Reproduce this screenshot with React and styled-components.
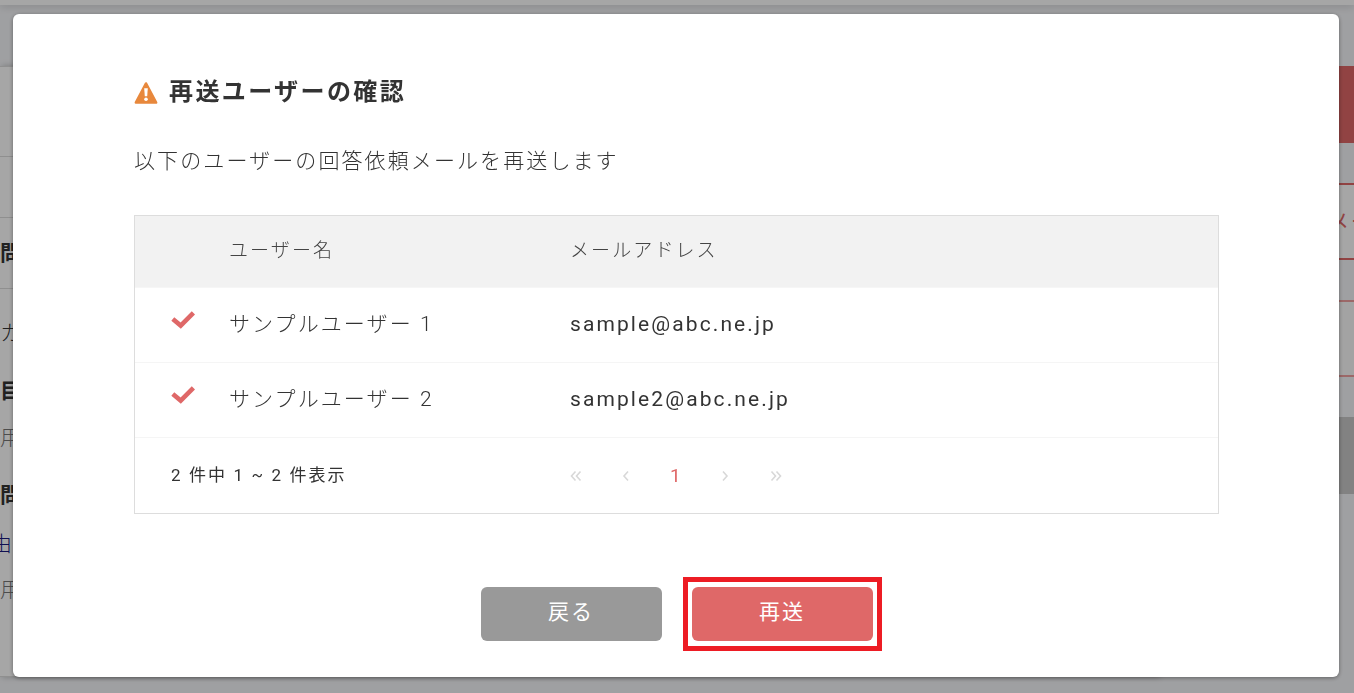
import React, { useState } from "react";
import styled, { createGlobalStyle } from "styled-components";

const GlobalStyle = createGlobalStyle`
  * {
    box-sizing: border-box;
  }
  body {
    margin: 0;
    color: #333;
    font-family: Roboto, "Noto Sans CJK JP", sans-serif;
    font-size: 21px;
    letter-spacing: 0.1em;
    overflow: hidden;
  }
`;

/* ---------- page behind the dialog ---------- */

const Page = styled.div`
  min-height: 100vh;
  overflow: hidden;
  background: #f5f6f9;
`;

const TopBar = styled.header`
  height: 5px;
  background: #fff;
  box-shadow: 0 1px 8px rgba(0, 0, 0, 0.2);
`;

const PageBody = styled.div`
  display: flex;
  padding-top: 61px;
`;

const Panel = styled.main`
  flex: 1;
  min-width: 0;
  background: #fff;
  border-top: 1px solid #dcdcdc;
  border-bottom: 1px solid #dcdcdc;
  box-shadow: 2px 0 6px rgba(0, 0, 0, 0.25);
`;

const Line = styled.div`
  display: flex;
  align-items: center;
  height: ${(props) => props.$height};
  padding-bottom: 4px;
  border-bottom: ${(props) => (props.$ruled ? "1px solid #dcdcdc" : "none")};
  color: ${(props) => (props.$muted ? "#777" : "#333")};
  font-weight: ${(props) => (props.$bold ? 700 : 300)};
`;

const ClippedLink = styled.a`
  display: flex;
  justify-content: flex-end;
  width: 12px;
  overflow: hidden;
  color: #1a1a80;
  letter-spacing: 0;
  text-decoration: none;
`;

const Aside = styled.aside`
  display: flex;
  flex-direction: column;
  gap: 40px;
  width: 196px;
  padding-left: 140px;
`;

const SideButton = styled.button`
  flex: none;
  height: 77px;
  padding: 0 0 4px 28px;
  overflow: hidden;
  border: 2px solid ${(props) => props.$line};
  border-right: none;
  background: ${(props) => props.$fill};
  color: #df6868;
  font: inherit;
  letter-spacing: inherit;
  text-align: left;
  white-space: nowrap;
`;

/* ---------- dialog ---------- */

const Overlay = styled.div`
  position: fixed;
  inset: 0;
  padding: 14px 15px 16px 13px;
  background: rgba(0, 0, 0, 0.35);
`;

const Dialog = styled.section`
  padding: 62px 120px 36px 121px;
  border-radius: 6px;
  background: #fff;
  box-shadow: 0 1px 4px rgba(0, 0, 0, 0.4);
`;

const Title = styled.h2`
  display: flex;
  align-items: center;
  gap: 11px;
  margin: 0 0 38px;
  font-size: 24px;
  font-weight: 700;
  letter-spacing: 0.1em;
  line-height: 32px;
`;

const Lead = styled.p`
  margin: 0 0 39px;
  font-weight: 300;
  line-height: 30px;
`;

const UserTable = styled.table`
  width: 100%;
  border: 1px solid #ddd;
  border-spacing: 0;
  table-layout: fixed;
  text-align: left;
`;

const HeadCell = styled.th`
  width: ${(props) => props.$width};
  height: 72px;
  padding: 0 0 6px 36px;
  border-bottom: 1px solid #f6f6f6;
  background: #f2f2f2;
  color: #444;
  font-size: 19px;
  font-weight: 300;
`;

const Cell = styled.td`
  height: 75px;
  padding: 0 0 ${(props) => (props.$light ? "6px" : "2px")} 36px;
  border-bottom: 1px solid #f5f5f5;
  font-weight: ${(props) => (props.$light ? 300 : 400)};
`;

const CheckCell = styled(Cell)`
  padding-bottom: 6px;
`;

const FootCell = styled.td`
  height: 75px;
  padding: 0 0 ${(props) => (props.$text ? "4px" : "0")} 36px;
  font-size: 17px;
`;

const Pagination = styled.nav`
  display: flex;
  align-items: center;
  gap: 38px;
`;

const PageButton = styled.button`
  display: flex;
  justify-content: ${(props) => (props.$current ? "flex-start" : "center")};
  width: 12px;
  padding: 0;
  border: none;
  background: none;
  color: ${(props) => (props.$current ? "#df6868" : "#d8d8d8")};
  font: inherit;
  font-size: 19px;
  letter-spacing: 0;
`;

const Actions = styled.div`
  display: flex;
  justify-content: center;
  gap: 30px;
  margin-top: 73px;
`;

const ActionButton = styled.button`
  position: relative;
  width: 181px;
  height: 54px;
  padding: 0 0 8px;
  border: none;
  border-radius: 6px;
  background: ${(props) => (props.$primary ? "#df6868" : "#999")};
  color: #fff;
  font: inherit;
  letter-spacing: inherit;
  cursor: pointer;
`;

const Highlight = styled.span`
  position: absolute;
  inset: -10px -9px;
  border: 5px solid #ed1c24;
  pointer-events: none;
`;

const WarningIcon = () => (
  <svg width="24" height="26" viewBox="0 0 24 26" aria-hidden="true">
    <path
      d="M12 4.4 22.2 23.6H1.8Z"
      fill="#e8883c"
      stroke="#e8883c"
      strokeWidth="2.4"
      strokeLinejoin="round"
    />
    <path d="M10.2 9.2h3.6l-.6 8h-2.4Z" fill="#fff" />
    <circle cx="12" cy="20.2" r="1.8" fill="#fff" />
  </svg>
);

const CheckIcon = () => (
  <svg width="24" height="18" viewBox="0 0 24 18" role="img" aria-label="選択済み">
    <path d="M1.8 8 9.7 14.6 22.4 1.8" fill="none" stroke="#df6868" strokeWidth="4.6" />
  </svg>
);

const Chevron = ({ double, right }) => (
  <svg
    width="12"
    height="12"
    viewBox="0 0 12 12"
    fill="none"
    stroke="currentColor"
    strokeWidth="1.6"
    aria-hidden="true"
  >
    {right ? (
      <path d={double ? "M1.5 1.5 5.5 6 1.5 10.5M6.5 1.5 10.5 6 6.5 10.5" : "M3 1.5 7 6 3 10.5"} />
    ) : (
      <path d={double ? "M5.5 1.5 1.5 6 5.5 10.5M10.5 1.5 6.5 6 10.5 10.5" : "M8 1.5 4 6 8 10.5"} />
    )}
  </svg>
);

const users = [
  { name: "サンプルユーザー 1", mail: "sample@abc.ne.jp" },
  { name: "サンプルユーザー 2", mail: "sample2@abc.ne.jp" },
];

const Background = () => (
  <Page>
    <TopBar />
    <PageBody>
      <Panel>
        <Line $height="90px" $ruled />
        <Line $height="61px" $ruled />
        <Line $height="71px" $ruled $bold>問</Line>
        <Line $height="88px">カ</Line>
        <Line $height="28px" $bold>目</Line>
        <Line $height="65px" $muted>用</Line>
        <Line $height="49px" $bold>問</Line>
        <Line $height="49px">
          <ClippedLink href="#reason">由</ClippedLink>
        </Line>
        <Line $height="43px" $muted>用</Line>
        <Line $height="65px" />
      </Panel>
      <Aside>
        <SideButton $line="#df6868" $fill="#df6868" />
        <SideButton $line="#df6868" $fill="#fff">メー</SideButton>
        <SideButton $line="#f0a0a0" $fill="#fafafa" />
        <SideButton $line="#c8c8c8" $fill="#c8c8c8" />
      </Aside>
    </PageBody>
  </Page>
);

const App = () => {
  const [open, setOpen] = useState(true);

  return (
    <>
      <GlobalStyle />
      <Background />
      {open && (
        <Overlay>
          <Dialog role="dialog" aria-modal="true" aria-labelledby="dialog-title">
            <Title id="dialog-title">
              <WarningIcon />
              再送ユーザーの確認
            </Title>
            <Lead>以下のユーザーの回答依頼メールを再送します</Lead>
            <UserTable>
              <thead>
                <tr>
                  <HeadCell $width="58px" />
                  <HeadCell $width="341px">ユーザー名</HeadCell>
                  <HeadCell>メールアドレス</HeadCell>
                </tr>
              </thead>
              <tbody>
                {users.map((user) => (
                  <tr key={user.mail}>
                    <CheckCell>
                      <CheckIcon />
                    </CheckCell>
                    <Cell $light>{user.name}</Cell>
                    <Cell>{user.mail}</Cell>
                  </tr>
                ))}
              </tbody>
              <tfoot>
                <tr>
                  <FootCell colSpan={2} $text>2 件中 1 ~ 2 件表示</FootCell>
                  <FootCell>
                    <Pagination aria-label="ページ">
                      <PageButton aria-label="最初">
                        <Chevron double />
                      </PageButton>
                      <PageButton aria-label="前へ">
                        <Chevron />
                      </PageButton>
                      <PageButton $current aria-current="page">1</PageButton>
                      <PageButton aria-label="次へ">
                        <Chevron right />
                      </PageButton>
                      <PageButton aria-label="最後">
                        <Chevron double right />
                      </PageButton>
                    </Pagination>
                  </FootCell>
                </tr>
              </tfoot>
            </UserTable>
            <Actions>
              <ActionButton onClick={() => setOpen(false)}>戻る</ActionButton>
              <ActionButton $primary onClick={() => setOpen(false)}>
                再送
                <Highlight />
              </ActionButton>
            </Actions>
          </Dialog>
        </Overlay>
      )}
    </>
  );
};

export default App;
